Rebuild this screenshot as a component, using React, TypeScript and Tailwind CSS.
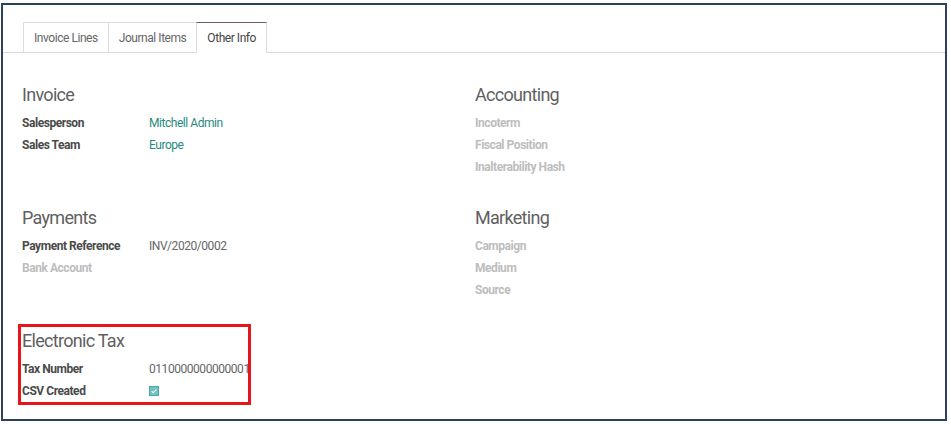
import React from 'react';

type Row = { label: string; value?: string; link?: boolean; muted?: boolean; check?: boolean };

const Group: React.FC<{ title: string; rows: Row[]; className?: string }> = ({ title, rows, className }) => (
  <div className={className}>
    <div className="h-[28px] flex items-center text-[18px] tracking-[-0.7px] text-[#5f5f5f] leading-none">{title}</div>
    <div className="mt-[3px]">
      {rows.map((r) => (
        <div key={r.label} className="h-[22px] flex items-center text-[12px] tracking-[-0.45px]">
          <span className={`w-[127px] font-bold ${r.muted ? 'text-[#bdbdbd]' : 'text-[#4a4a4a]'}`}>{r.label}</span>
          {r.check ? (
            <span className="w-[10px] h-[10px] bg-[#6cc3c1] border border-[#4aa9a6] flex items-center justify-center">
              <svg viewBox="0 0 10 10" className="w-[8px] h-[8px]">
                <path d="M2 5.2 L4.1 7.2 L8 3" fill="none" stroke="#fff" strokeWidth="1.3" />
              </svg>
            </span>
          ) : (
            r.value && <span className={r.link ? 'text-[#1f8a7e]' : 'text-[#666]'}>{r.value}</span>
          )}
        </div>
      ))}
    </div>
  </div>
);

export default function App() {
  const tabs = ['Invoice Lines', 'Journal Items', 'Other Info'];
  return (
    <div className="w-[951px] h-[425px] bg-white pt-[3px] pl-[1px]" style={{ fontFamily: 'Roboto, "Liberation Sans", sans-serif' }}>
      <div className="w-[946px] h-[418px] border-2 border-[#2b405c] flex flex-col">
        <div className="mt-[17px] h-[31px] border-b border-[#d9d9d9] flex pl-[20px] text-[12px] tracking-[-0.45px] text-[#666]">
          {tabs.map((t, i) => (
            <div
              key={t}
              className={`flex items-center px-[10px] border-l border-t border-[#dcdcdc] ${i === 2 ? 'border-r border-t-[#6c5a6a] bg-white text-[#444] -mb-px' : ''}`}
            >
              {t}
            </div>
          ))}
        </div>
        <div className="grid grid-cols-[453px_1fr] pl-[19px] mt-[28px] gap-y-[26px]">
          <Group
            title="Invoice"
            rows={[
              { label: 'Salesperson', value: 'Mitchell Admin', link: true },
              { label: 'Sales Team', value: 'Europe', link: true },
            ]}
          />
          <Group
            title="Accounting"
            rows={[
              { label: 'Incoterm', muted: true },
              { label: 'Fiscal Position', muted: true },
              { label: 'Inalterability Hash', muted: true },
            ]}
          />
          <Group
            title="Payments"
            rows={[
              { label: 'Payment Reference', value: 'INV/2020/0002' },
              { label: 'Bank Account', muted: true },
            ]}
          />
          <Group
            title="Marketing"
            rows={[
              { label: 'Campaign', muted: true },
              { label: 'Medium', muted: true },
              { label: 'Source', muted: true },
            ]}
          />
          <div className="relative">
            <Group
              title="Electronic Tax"
              rows={[
                { label: 'Tax Number', value: '0110000000000001' },
                { label: 'CSV Created', check: true },
              ]}
            />
            <span className="absolute left-[-4px] top-[-3px] w-[233px] h-[81px] border-[3px] border-[#e8141b] pointer-events-none" />
          </div>
        </div>
      </div>
    </div>
  );
}
